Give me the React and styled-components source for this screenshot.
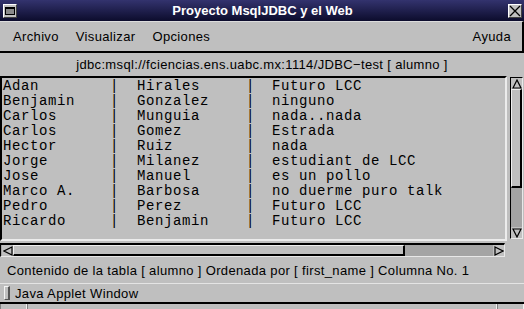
import styled, { createGlobalStyle } from "styled-components"

const Global = createGlobalStyle`
html, body {
  margin: 0;
  padding: 0;
  background: #bfbfbf;
}
body {
  font-family: "Liberation Sans", Arial, sans-serif;
  letter-spacing: 0.35px;
}
`;

const Window = styled.div`
width: 524px;
height: 309px;
overflow: hidden;
display: flex;
flex-direction: column;
background: #bfbfbf;
`;

const TitleBar = styled.div`
height: 21px;
flex: none;
display: flex;
align-items: center;
justify-content: space-between;
padding: 0 2px 0 3px;
background: linear-gradient(#33336e, #0c0c2c);
`;

const Title = styled.span`
color: #fff;
font-weight: 700;
font-size: 13px;
letter-spacing: 0;
`;

const WinButton = styled.div`
width: 14px;
height: 14px;
box-sizing: border-box;
background: #c0c0c0;
border: 1px solid #fff;
border-right-color: #404040;
border-bottom-color: #404040;
display: flex;
align-items: center;
justify-content: center;
`;

const MenuIcon = styled.div`
width: 10px;
height: 8px;
box-sizing: border-box;
border: 1px solid #000;
border-top-width: 2px;
background: #8a8a8a;
`;

const MenuBar = styled.div`
height: 29px;
flex: none;
display: flex;
align-items: center;
gap: 17px;
padding: 0 11px 0 13px;
border-top: 1px solid #dcdcdc;
border-bottom: 2px solid #000;
border-right: 2px solid #000;
font-size: 13px;
`;

const MenuItem = styled.span`
color: #000;
margin-left: ${p => (p.$right ? "auto" : "0")};
`;

const UrlBar = styled.div`
height: 23px;
flex: none;
display: flex;
align-items: center;
justify-content: center;
font-size: 13px;
`;

const ListArea = styled.div`
height: 165px;
flex: none;
display: flex;
gap: 3px;
`;

const ListBox = styled.div`
width: 507px;
box-sizing: border-box;
border-top: 2px solid #000;
border-left: 2px solid #000;
border-right: 2px solid #ececec;
border-bottom: 2px solid #ececec;
padding: 1px 0 0 1px;
overflow: hidden;
font-family: "Liberation Mono", "Courier New", monospace;
font-size: 14px;
letter-spacing: 0.6px;
`;

const Row = styled.div`
display: grid;
grid-template-columns: 107px 27px 109px 26px 1fr;
height: 15px;
line-height: 15px;
white-space: pre;
color: #000;
`;

const VScroll = styled.div`
width: 13px;
box-sizing: border-box;
margin-top: 1px;
height: 162px;
display: flex;
flex-direction: column;
border-top: 1px solid #000;
border-left: 1px solid #000;
border-right: 1px solid #e8e8e8;
border-bottom: 1px solid #e8e8e8;
background: #a4a4a4;
`;

const Arrow = styled.div`
flex: none;
width: ${p => (p.$h ? "11px" : "auto")};
height: ${p => (p.$h ? "auto" : "11px")};
background: #c0c0c0;
display: flex;
align-items: center;
justify-content: center;
`;

const Thumb = styled.div`
flex: none;
box-sizing: border-box;
background: #c0c0c0;
border: 1px solid #f0f0f0;
border-right: 2px solid #000;
border-bottom: 2px solid #000;
height: ${p => p.$size};
width: ${p => (p.$h ? p.$len : "auto")};
`;

const Trough = styled.div`
flex: 1;
`;

const HScroll = styled.div`
width: 505px;
height: 14px;
margin-top: 2px;
box-sizing: border-box;
display: flex;
border-top: 2px solid #000;
border-left: 1px solid #000;
border-bottom: 1px solid #e8e8e8;
border-right: 1px solid #e8e8e8;
background: #a4a4a4;
padding-left: 1px;
`;

const Status = styled.div`
height: 26px;
flex: none;
display: flex;
align-items: center;
padding-left: 7px;
font-size: 13px;
border-bottom: 1px solid #e4e4e4;
`;

const AppletBar = styled.div`
height: 18px;
flex: none;
display: flex;
align-items: center;
gap: 5px;
padding-left: 4px;
font-size: 13px;
border-bottom: 2px solid #000;
`;

const Tab = styled.div`
width: 6px;
height: 14px;
box-sizing: border-box;
border: 1px solid #f4f4f4;
border-right: 2px solid #555;
border-bottom: 1px solid #555;
`;

const Footer = styled.div`
flex: 1;
display: grid;
grid-template-columns: 27px 470px 1fr;
`;

const FooterCell = styled.div`
border-right: 1px solid #f0f0f0;
border-left: 1px solid #808080;
`;

const rows = [
  ["Adan", "Hirales", "Futuro LCC"],
  ["Benjamin", "Gonzalez", "ninguno"],
  ["Carlos", "Munguia", "nada..nada"],
  ["Carlos", "Gomez", "Estrada"],
  ["Hector", "Ruiz", "nada"],
  ["Jorge", "Milanez", "estudiant de LCC"],
  ["Jose", "Manuel", "es un pollo"],
  ["Marco A.", "Barbosa", "no duerme puro talk"],
  ["Pedro", "Perez", "Futuro LCC"],
  ["Ricardo", "Benjamin", "Futuro LCC"],
];

const tri = {
  up: "M1 9 L5 1 L9 9 Z",
  down: "M1 1 L9 1 L5 9 Z",
  left: "M9 1 L1 5 L9 9 Z",
  right: "M1 1 L9 5 L1 9 Z",
};

function ArrowIcon({ dir }) {
  return (
    <svg width="10" height="10" viewBox="0 0 10 10">
      <path d={tri[dir]} fill="#c0c0c0" stroke="#000" strokeWidth="1.2" />
    </svg>
  );
}

function App() {
  return (
    <Window>
      <Global />
      <TitleBar>
        <WinButton>
          <MenuIcon />
        </WinButton>
        <Title>Proyecto MsqlJDBC y el Web</Title>
        <WinButton>
          <svg width="12" height="12" viewBox="0 0 12 12">
            <path d="M1 1 L11 11 M11 1 L1 11" stroke="#000" strokeWidth="1.3" />
          </svg>
        </WinButton>
      </TitleBar>
      <MenuBar>
        <MenuItem>Archivo</MenuItem>
        <MenuItem>Visualizar</MenuItem>
        <MenuItem>Opciones</MenuItem>
        <MenuItem $right>Ayuda</MenuItem>
      </MenuBar>
      <UrlBar>jdbc:msql://fciencias.ens.uabc.mx:1114/JDBC−test [ alumno ]</UrlBar>
      <ListArea>
        <ListBox>
          {rows.map((r, i) => (
            <Row key={i}>
              <span>{r[0]}</span>
              <span>|</span>
              <span>{r[1]}</span>
              <span>|</span>
              <span>{r[2]}</span>
            </Row>
          ))}
        </ListBox>
        <VScroll>
          <Arrow>
            <ArrowIcon dir="up" />
          </Arrow>
          <Thumb $size="99px" />
          <Trough />
          <Arrow>
            <ArrowIcon dir="down" />
          </Arrow>
        </VScroll>
      </ListArea>
      <HScroll>
        <Arrow $h>
          <ArrowIcon dir="left" />
        </Arrow>
        <Thumb $h $len="392px" />
        <Trough />
        <Arrow $h>
          <ArrowIcon dir="right" />
        </Arrow>
      </HScroll>
      <Status>Contenido de la tabla [ alumno ] Ordenada por [ first_name ] Columna No. 1</Status>
      <AppletBar>
        <Tab />
        <span>Java Applet Window</span>
      </AppletBar>
      <Footer>
        <FooterCell />
        <FooterCell />
        <FooterCell />
      </Footer>
    </Window>
  );
}

export default App
